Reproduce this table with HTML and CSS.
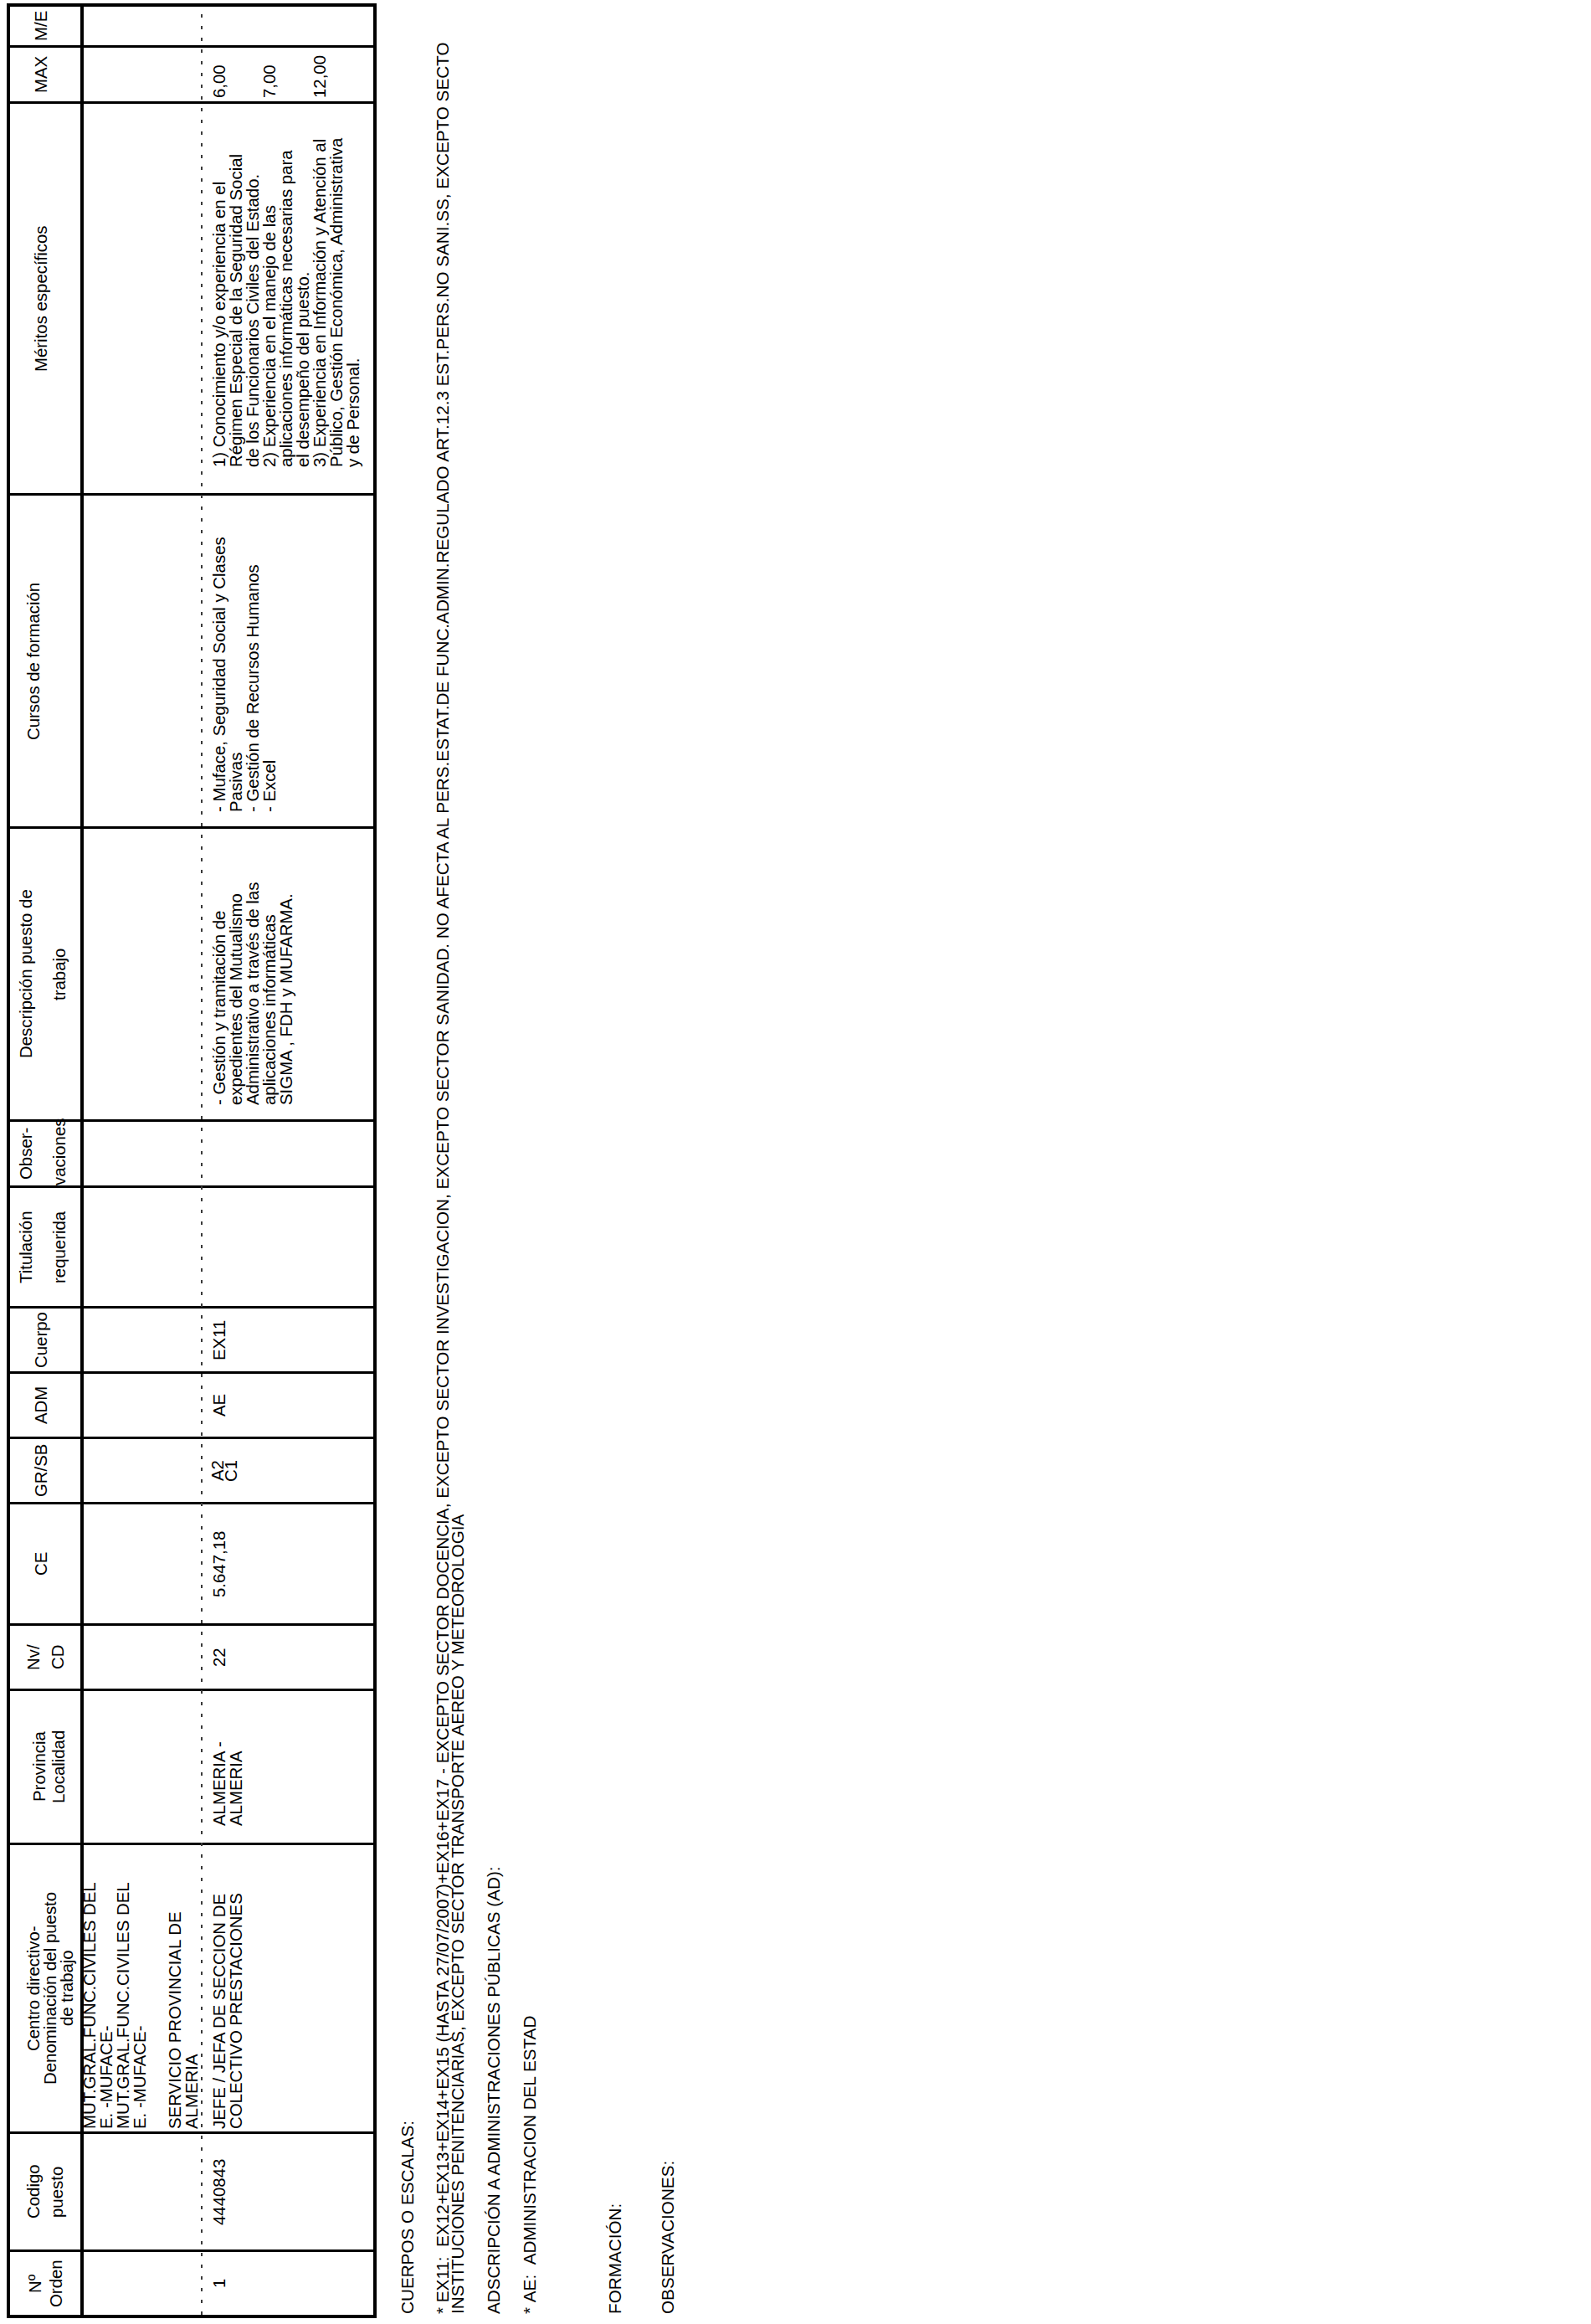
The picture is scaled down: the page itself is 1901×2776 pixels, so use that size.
FILE: index.html
```html
<!DOCTYPE html>
<html lang="es">
<head>
<meta charset="utf-8">
<title>Puesto 4440843</title>
<link rel="stylesheet" href="styles.css">
</head>
<body>
<div class="page">
  <div class="table">
    <div class="h first h-orden">Nº<br>Orden</div>
    <div class="h h-codigo">Codigo<br>puesto</div>
    <div class="h h-centro">Centro directivo-<br>Denominación del puesto<br>de trabajo</div>
    <div class="h h-prov">Provincia<br>Localidad</div>
    <div class="h h-nv">Nv/<br>CD</div>
    <div class="h h-one">CE</div>
    <div class="h h-one">GR/SB</div>
    <div class="h h-one">ADM</div>
    <div class="h h-one">Cuerpo</div>
    <div class="h h-two">Titulación<br>requerida</div>
    <div class="h h-two h-obs">Obser-<br>vaciones</div>
    <div class="h h-two">Descripción puesto de<br>trabajo</div>
    <div class="h h-cursos">Cursos de formación</div>
    <div class="h h-one">Méritos específicos</div>
    <div class="h h-one">MAX</div>
    <div class="h h-one">M/E</div>

    <div class="b first center"><div class="data">1</div></div>
    <div class="b center"><div class="data">4440843</div></div>
    <div class="b b-centro">
      <div class="upper">MUT.GRAL.FUNC.CIVILES DEL<br>E. -MUFACE-<br>MUT.GRAL.FUNC.CIVILES DEL<br>E. -MUFACE-<br><span class="gap"></span>SERVICIO PROVINCIAL DE<br>ALMERIA</div>
      <div class="data">JEFE / JEFA DE SECCION DE<br>COLECTIVO PRESTACIONES</div>
    </div>
    <div class="b b-prov"><div class="data">ALMERIA -<br>ALMERIA</div></div>
    <div class="b center"><div class="data">22</div></div>
    <div class="b center"><div class="data">5.647,18</div></div>
    <div class="b center"><div class="data tight">A2<br>C1</div></div>
    <div class="b center"><div class="data">AE</div></div>
    <div class="b center"><div class="data">EX11</div></div>
    <div class="b"></div>
    <div class="b"></div>
    <div class="b b-desc"><div class="data">- Gestión y tramitación de<br>expedientes del Mutualismo<br>Administrativo a través de las<br>aplicaciones informáticas<br>SIGMA , FDH y MUFARMA.</div></div>
    <div class="b b-cursos"><div class="data">- Muface, Seguridad Social y Clases<br>Pasivas<br>- Gestión de Recursos Humanos<br>- Excel</div></div>
    <div class="b b-meritos"><div class="data">1) Conocimiento y/o experiencia en el<br>Régimen Especial de la Seguridad Social<br>de los Funcionarios Civiles del Estado.<br>2) Experiencia en el manejo de las<br>aplicaciones informáticas necesarias para<br>el desempeño del puesto.<br>3) Experiencia en Información y Atención al<br>Público, Gestión Económica, Administrativa<br>y de Personal.</div></div>
    <div class="b b-max"><div class="data">6,00<br><br><br>7,00<br><br><br>12,00</div></div>
    <div class="b"></div>
  </div>

  <div class="notes">
    <p class="n1">CUERPOS O ESCALAS:</p>
    <p class="n2">*&nbsp;EX11:&nbsp;&nbsp;EX12+EX13+EX14+EX15 (HASTA 27/07/2007)+EX16+EX17 - EXCEPTO SECTOR DOCENCIA, EXCEPTO SECTOR INVESTIGACION, EXCEPTO SECTOR SANIDAD. NO AFECTA AL PERS.ESTAT.DE FUNC.ADMIN.REGULADO ART.12.3 EST.PERS.NO SANI.SS, EXCEPTO SECTO<br>INSTITUCIONES PENITENCIARIAS, EXCEPTO SECTOR TRANSPORTE AEREO Y METEOROLOGIA</p>
    <p class="n3">ADSCRIPCIÓN A ADMINISTRACIONES PÚBLICAS (AD):</p>
    <p class="n4">*&nbsp;AE:&nbsp;&nbsp;ADMINISTRACION DEL ESTAD</p>
    <p class="n5">FORMACIÓN:</p>
    <p class="n6">OBSERVACIONES:</p>
  </div>
</div>
</body>
</html>
```

FILE: styles.css
```css
html, body {
  margin: 0;
  padding: 0;
  background: #ffffff;
}

body {
  width: 1901px;
  height: 2776px;
  overflow: hidden;
}

/* The sheet is a landscape page printed sideways: vertical writing mode
   turned half a turn makes the lines read bottom-to-top. */
.page {
  writing-mode: vertical-rl;
  text-orientation: sideways;
  transform: rotate(180deg);
  inline-size: 2776px;
  block-size: 1901px;
  box-sizing: border-box;
  padding-block-start: 8px;
  padding-inline-start: 7px;
  font-family: "Liberation Sans", Arial, sans-serif;
  font-size: 20.4px;
  line-height: 20px;
  color: #000;
  white-space: nowrap;
}

/* ---------- table ---------- */
.table {
  position: relative;
  display: grid;
  grid-template-columns: 75px 141px 345px 184px 78px 145px 78px 78px 78px 144px 79px 350px 398px 468px 67px 49px;
  grid-template-rows: 88px 346px;
  inline-size: max-content;
  border: 4px solid #000;
}

.table::after {
  content: "";
  position: absolute;
  inset-inline-start: 0;
  inset-inline-end: 0;
  inset-block-start: 228px;
  block-size: 2px;
  background: repeating-linear-gradient(to bottom, #3a3a3a 0 4px, transparent 4px 14px);
}

.h {
  box-sizing: border-box;
  border-inline-start: 3px solid #000;
  border-block-end: 4px solid #000;
  text-align: center;
}

.b {
  box-sizing: border-box;
  border-inline-start: 3px solid #000;
  display: flex;
  flex-direction: column;
}

.first {
  border-inline-start: none;
}

.h-orden { padding-block-start: 18px; line-height: 25px; }
.h-codigo { padding-block-start: 14px; line-height: 28px; }
.h-centro { padding-block-start: 18px; line-height: 20px; }
.h-prov { padding-block-start: 24px; line-height: 23px; }
.h-nv { padding-block-start: 14px; line-height: 29px; }
.h-one { padding-block-start: 27px; line-height: 20px; }
.h-cursos { padding-block-start: 18px; line-height: 20px; }
.h-two { padding-block-start: 0; line-height: 40px; margin-block-start: -1px; }
.h-obs { position: relative; z-index: 1; }

/* ---------- body cells ---------- */
.data {
  padding-block-start: 152px;
}

.center {
  text-align: center;
}

.tight {
  line-height: 16px;
}

.b-centro {
  padding-inline-start: 3px;
}

.b-centro .upper {
  margin-block-start: -3px;
  block-size: 144px;
  position: relative;
  z-index: 1;
}

.b-centro .upper .gap {
  display: block;
  block-size: 22px;
}

.b-centro .data {
  padding-block-start: 11px;
}

.b-prov { padding-inline-start: 20px; }
.b-desc { padding-inline-start: 17px; }
.b-cursos { padding-inline-start: 17px; }
.b-meritos { padding-inline-start: 31px; }
.b-max { padding-inline-start: 4px; }

/* ---------- notes ---------- */
.notes {
  padding-inline-start: 5px;
  font-size: 20.7px;
}

.notes p {
  margin: 0;
}

.notes .n1 { margin-block-start: 27px; }
.notes .n2 { margin-block-start: 23px; line-height: 18px; }
.notes .n3 { margin-block-start: 24px; }
.notes .n4 { margin-block-start: 23px; }
.notes .n5 { margin-block-start: 82px; }
.notes .n6 { margin-block-start: 43px; }
```
